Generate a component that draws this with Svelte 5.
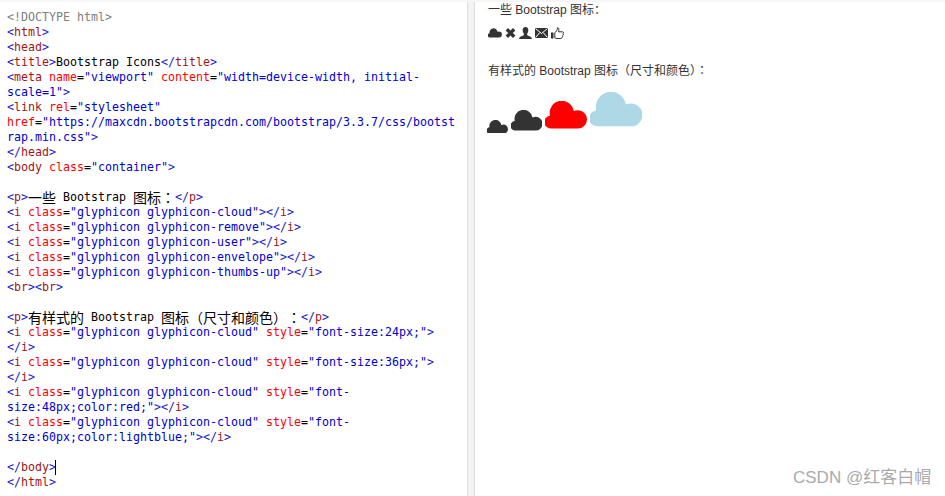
<script>
 const code = [
     [['d', '<!DOCTYPE html>']],
     [['t', '<html>']],
     [['t', '<head>']],
     [['t', '<title>'], ['x', 'Bootstrap Icons'], ['t', '</title>']],
     [['t', '<meta '], ['a', 'name'], ['x', '='], ['s', '"viewport"'], ['x', ' '], ['a', 'content'], ['x', '='], ['s', '"width=device-width, initial-']],
     [['s', 'scale=1"'], ['t', '>']],
     [['t', '<link '], ['a', 'rel'], ['x', '='], ['s', '"stylesheet"']],
     [['a', 'href'], ['x', '='], ['s', '"https://maxcdn.bootstrapcdn.com/bootstrap/3.3.7/css/bootst']],
     [['s', 'rap.min.css"'], ['t', '>']],
     [['t', '</head>']],
     [['t', '<body '], ['a', 'class'], ['x', '='], ['s', '"container"'], ['t', '>']],
     [],
     [['t', '<p>'], ['c', '一些'], ['x', ' Bootstrap '], ['c', '图标'], ['p', '：'], ['t', '</p>']],
     ...['cloud', 'remove', 'user', 'envelope', 'thumbs-up'].map(name => [
         ['t', '<i '], ['a', 'class'], ['x', '='], ['s', `"glyphicon glyphicon-${name}"`], ['t', '></i>']
     ]),
     [['t', '<br><br>']],
     [],
     [['t', '<p>'], ['c', '有样式的'], ['x', ' Bootstrap '], ['c', '图标（尺寸和颜色）'], ['p', '：'], ['t', '</p>']],
     [['t', '<i '], ['a', 'class'], ['x', '='], ['s', '"glyphicon glyphicon-cloud"'], ['x', ' '], ['a', 'style'], ['x', '='], ['s', '"font-size:24px;"'], ['t', '>']],
     [['t', '</i>']],
     [['t', '<i '], ['a', 'class'], ['x', '='], ['s', '"glyphicon glyphicon-cloud"'], ['x', ' '], ['a', 'style'], ['x', '='], ['s', '"font-size:36px;"'], ['t', '>']],
     [['t', '</i>']],
     [['t', '<i '], ['a', 'class'], ['x', '='], ['s', '"glyphicon glyphicon-cloud"'], ['x', ' '], ['a', 'style'], ['x', '='], ['s', '"font-']],
     [['s', 'size:48px;color:red;"'], ['t', '></i>']],
     [['t', '<i '], ['a', 'class'], ['x', '='], ['s', '"glyphicon glyphicon-cloud"'], ['x', ' '], ['a', 'style'], ['x', '='], ['s', '"font-']],
     [['s', 'size:60px;color:lightblue;"'], ['t', '></i>']],
     [],
     [['t', '</body>'], ['k', '']],
     [['t', '</html>']],
 ];
 // brackets are blue, tag names dark red
 function tagParts(text) {
     return text.split(/(<\/?|\/?>)/).filter(Boolean).map(part => ({
         text: part,
         cls: /[<>]/.test(part) ? 'b' : 't'
     }));
 }
 const clouds = [
     { size: 24, color: '#333' },
     { size: 36, color: '#333' },
     { size: 48, color: 'red' },
     { size: 60, color: 'lightblue' },
 ];
 const cloudPath = 'M8 34.5H41A11.5 11.5 0 0 0 41.5 11.5Q38.5 11.5 36 12.6A15.2 15.2 0 1 0 6.2 18.5A8 8 0 0 0 8 34.5Z';
</script>

<div class="page">
    <div class="editor">
        <pre>{#each code as line}<div class="line">{#each line as [kind, text]}{#if kind === 'k'}<span class="caret"></span>{:else if kind === 't'}{#each tagParts(text) as part}<span class={part.cls}>{part.text}</span>{/each}{:else}<span class={kind}>{text}</span>{/if}{/each}</div>{/each}</pre>
    </div>
    <div class="gutter"></div>
    <div class="result">
        <p class="first">一些 Bootstrap 图标：</p>
        <div class="icons">
            <svg width="14" height="12" viewBox="0 0 53 35"><path d={cloudPath} /></svg>
            <svg width="11" height="12" viewBox="0 0 11 12"><path d="M3 1 5.5 3.6 8 1 10.4 3.4 7.8 6 10.4 8.6 8 11 5.5 8.4 3 11 .6 8.6 3.2 6 .6 3.4Z" /></svg>
            <svg width="13" height="12" viewBox="0 0 13 12"><path d="M6.5 0C8.5 0 9.5 1.5 9.3 3.5 9.2 5 8.6 6 8.1 6.8V8C9 9 12.5 9.2 13 12H0C.5 9.2 4 9 4.9 8V6.8C4.4 6 3.8 5 3.7 3.5 3.5 1.5 4.5 0 6.5 0Z" /></svg>
            <svg width="13" height="12" viewBox="0 0 13 12"><path d="M0 1H13V11H0Z" /><path class="cut" d="M.5 1.5 6.5 6.5 12.5 1.5M.5 10.5 4.8 5.6M12.5 10.5 8.2 5.6" /></svg>
            <svg width="13" height="12" viewBox="0 0 13 12"><path d="M0 5.5H2.5V11.5H0Z" /><path class="outline" d="M3.8 5.6C5.2 5 6.3 3 6.5 .8 7.8.4 8.3 2.5 7.4 4.8H11.4C12.8 4.8 12.6 6.2 12 6.6 12.6 7.2 12.3 8.2 11.7 8.5 12 9.2 11.6 10 11 10.2 11.1 11 10.6 11.5 9.8 11.5H6C5 11.5 4.6 11 3.8 10.8Z" /></svg>
        </div>
        <p class="second">有样式的 Bootstrap 图标（尺寸和颜色）<span class="p">：</span></p>
        <div class="clouds">
            {#each clouds as { size, color }}
                <svg width={size * 0.88} height={size * 0.58} viewBox="0 0 53 35" style:fill={color} style:margin-bottom="{size * 0.19}px"><path d={cloudPath} /></svg>
            {/each}
        </div>
    </div>
    <div class="mark">CSDN @红客白帽</div>
</div>

<style>
 :global(body) {
     margin: 0;
     background: #fff;
 }
 .page {
     position: relative;
     display: flex;
     width: 945px;
     height: 496px;
     padding-top: 2px;
     box-sizing: border-box;
     background: #f6f6f6;
     overflow: hidden;
 }
 .editor {
     width: 467px;
     flex: none;
     background: #fff;
     border-right: 1px solid #ddd;
 }
 pre {
     margin: 0;
     padding: 8px 0 0 7px;
     font: 11.63px/15px "DejaVu Sans Mono", monospace;
 }
 .line {
     height: 15px;
     white-space: pre;
     color: #000;
 }
 .d { color: #808080; }
 .b { color: #1a1ad0; }
 .t { color: #a31515; }
 .a { color: #f00; }
 .s { color: #0000cd; }
 .x { color: #000; }
 .c, .line .p {
     display: inline-block;
     vertical-align: top;
     font-size: 14px;
     line-height: 15px;
     color: #000;
 }
 .c {
     font-family: "Noto Sans CJK SC", sans-serif;
 }
 .p {
     font-family: "Noto Sans CJK TC", sans-serif;
 }
 .caret {
     display: inline-block;
     width: 1px;
     height: 15px;
     margin-left: -1px;
     background: #000;
     vertical-align: top;
 }
 .gutter {
     width: 6px;
     flex: none;
     background: #f3f3f3;
     border-right: 1px solid #ddd;
 }
 .result {
     flex: 1;
     background: #fff;
     padding-left: 13px;
     font: 12px/17px "Liberation Sans", "Noto Sans CJK SC", sans-serif;
     color: #333;
 }
 p {
     margin: 0;
 }
 .icons {
     display: flex;
     gap: 3px;
     margin-top: 8px;
 }
 .icons svg {
     fill: #333;
 }
 .icons .outline {
     fill: none;
     stroke: #333;
     stroke-width: 1;
 }
 .icons .cut {
     fill: none;
     stroke: #fff;
     stroke-width: 1;
 }
 .second {
     margin-top: 22px;
 }
 .clouds {
     display: flex;
     align-items: flex-end;
     gap: 2.5px;
     height: 70px;
     margin-left: -1px;
     margin-top: -12px;
 }
 .mark {
     position: absolute;
     left: 793px;
     top: 467px;
     font: 17px/22px "Liberation Sans", "Noto Sans CJK SC", sans-serif;
     color: #aaa;
 }
</style>
